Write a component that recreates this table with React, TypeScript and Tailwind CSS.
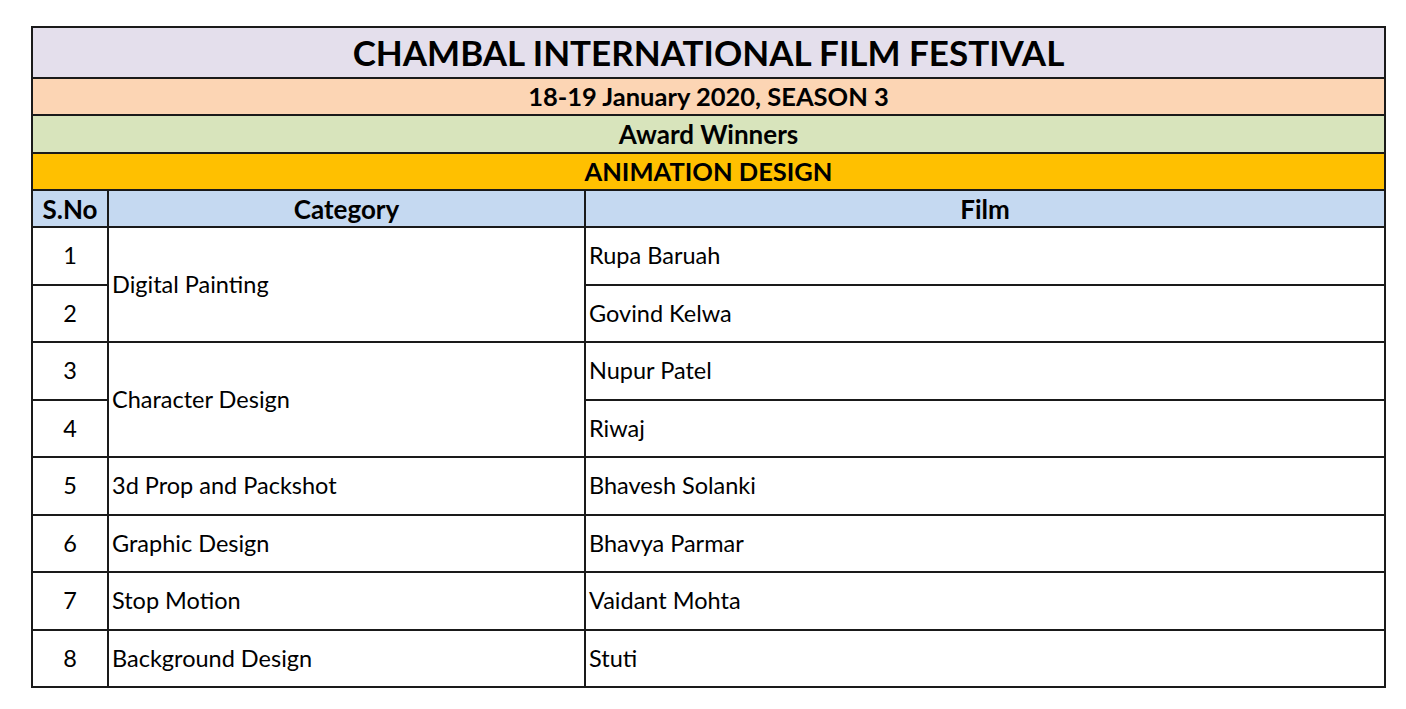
const rows = [
  { n: 1, film: "Rupa Baruah" },
  { n: 2, film: "Govind Kelwa" },
  { n: 3, film: "Nupur Patel" },
  { n: 4, film: "Riwaj" },
  { n: 5, film: "Bhavesh Solanki", cat: "3d Prop and Packshot" },
  { n: 6, film: "Bhavya Parmar", cat: "Graphic Design" },
  { n: 7, film: "Vaidant Mohta", cat: "Stop Motion" },
  { n: 8, film: "Stuti", cat: "Background Design" },
];

export default function App() {
  return (
    <div className="min-h-screen bg-white pl-[31px] pt-[26px] font-['Lato',sans-serif] text-black">
      <table className="w-[1355px] border-collapse table-fixed border-2 border-[#1a1a1a]">
        <colgroup>
          <col className="w-[76px]" />
          <col className="w-[477px]" />
          <col />
        </colgroup>
        <tbody>
          <tr className="h-[51px] bg-[#e4dfec]">
            <td colSpan={3} className="border-2 border-[#1a1a1a] text-center text-[35px] font-bold leading-none">
              CHAMBAL INTERNATIONAL FILM FESTIVAL
            </td>
          </tr>
          <tr className="h-[37px] bg-[#fcd5b4]">
            <td colSpan={3} className="border-2 border-[#1a1a1a] text-center text-[25.5px] font-bold leading-none">
              18-19 January 2020, SEASON 3
            </td>
          </tr>
          <tr className="h-[38px] bg-[#d8e4bc]">
            <td colSpan={3} className="border-2 border-[#1a1a1a] text-center text-[26px] font-bold leading-none">
              Award Winners
            </td>
          </tr>
          <tr className="h-[37px] bg-[#ffc000]">
            <td colSpan={3} className="border-2 border-[#1a1a1a] text-center text-[25.5px] font-bold leading-none">
              ANIMATION DESIGN
            </td>
          </tr>
          <tr className="h-[37px] bg-[#c5d9f1] text-[26px] font-bold">
            <td className="border-2 border-[#1a1a1a] text-center leading-none">S.No</td>
            <td className="border-2 border-[#1a1a1a] text-center leading-none">Category</td>
            <td className="border-2 border-[#1a1a1a] text-center leading-none">Film</td>
          </tr>
          {rows.map((r) => (
            <tr key={r.n} className="h-[57.5px] text-[23.5px]">
              <td className="border-2 border-[#1a1a1a] text-center">{r.n}</td>
              {r.n === 1 && (
                <td rowSpan={2} className="border-2 border-[#1a1a1a] pl-[3px]">
                  Digital Painting
                </td>
              )}
              {r.n === 3 && (
                <td rowSpan={2} className="border-2 border-[#1a1a1a] pl-[3px]">
                  Character Design
                </td>
              )}
              {r.cat && <td className="border-2 border-[#1a1a1a] pl-[3px]">{r.cat}</td>}
              <td className="border-2 border-[#1a1a1a] pl-[3px]">{r.film}</td>
            </tr>
          ))}
        </tbody>
      </table>
    </div>
  );
}
